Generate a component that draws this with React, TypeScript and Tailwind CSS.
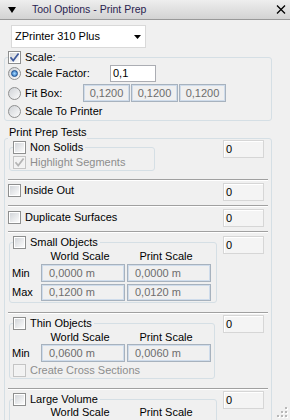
import React from 'react';

const Check: React.FC<{ checked?: boolean; disabled?: boolean }> = ({ checked, disabled }) => (
  <span
    className={`relative flex h-[13px] w-[13px] shrink-0 items-center justify-center border ${
      disabled ? 'border-[#c4c4c4] bg-[#f4f4f4]' : 'border-[#8e8f8f] bg-white'
    }`}
  >
    <span className={`h-[9px] w-[9px] ${disabled ? 'bg-[#f2f2f2]' : 'bg-linear-to-br from-[#d3d6da] to-[#fbfbfb]'}`} />
    {checked && (
      <svg className="absolute left-0 top-0" width="11" height="11" viewBox="0 0 11 11">
        <path d="M1.5 5.2 L4.2 8.6 L9.6 1.4" fill="none" stroke={disabled ? '#b4b4b4' : '#3f5a9c'} strokeWidth="1.7" />
      </svg>
    )}
  </span>
);

const Radio: React.FC<{ checked?: boolean }> = ({ checked }) => (
  <span className="flex h-[13px] w-[13px] shrink-0 items-center justify-center rounded-full border border-[#8e8f8f] bg-linear-to-br from-[#d0d3d7] to-[#fbfbfb]">
    {checked && <span className="h-[7px] w-[7px] rounded-full border border-[#1c4f8f] bg-radial from-[#a6dbff] to-[#1f67b8]" />}
  </span>
);

const Count: React.FC<{ className?: string }> = ({ className = '' }) => (
  <div className={`flex h-[18px] w-[41px] shrink-0 items-center border border-[#d6d6d6] bg-[#f4f4f4] pl-[2px] shadow-[inset_1px_1px_0_#fff] ${className}`}>
    0
  </div>
);

const Dim: React.FC<{ value: string; w: string; center?: boolean; h?: string }> = ({ value, w, center, h = 'h-[18px]' }) => (
  <div
    className={`flex ${h} ${w} items-center border border-[#a7b2be] bg-[#f0f0f0] text-[#6d6d6d] shadow-[inset_0_0_0_1px_#cfdceb] ${
      center ? 'justify-center' : 'pl-[7px]'
    }`}
  >
    {value}
  </div>
);

const Legend: React.FC<{ label: string; checked?: boolean }> = ({ label, checked }) => (
  <legend className="ml-[3px] pr-[2px]">
    <span className="flex h-[13px] items-center gap-[4px]">
      <Check checked={checked} />
      <span>{label}</span>
    </span>
  </legend>
);

const ScaleHeader = () => (
  <div className="flex h-[14px] items-center gap-[2px] pl-[28px]">
    <span className="w-[84px] text-center">World Scale</span>
    <span className="w-[84px] text-center">Print Scale</span>
  </div>
);

const ScaleRow: React.FC<{ label: string; world: string; print: string; className?: string; h?: string }> = ({
  label,
  world,
  print,
  className = '',
  h = 'h-[18px]',
}) => (
  <div className={`flex items-center pl-[2px] ${className}`}>
    <span className="w-[29px]">{label}</span>
    <div className="flex gap-[2px]">
      <Dim value={world} w="w-[84px]" h={h} />
      <Dim value={print} w="w-[84px]" h={h} />
    </div>
  </div>
);

const Sep: React.FC<{ className?: string }> = ({ className = '' }) => (
  <div className={`mx-[3px] h-px bg-[#a0a0a0] shadow-[0_1px_0_#fff] ${className}`} />
);

export default function App() {
  return (
    <div className="relative h-[420px] w-[290px] overflow-hidden bg-[#f0f0f0] font-['Liberation_Sans',Arial,sans-serif] text-[11px] leading-[13px] text-black">
      {/* title bar */}
      <div className="flex h-[20px] items-center border-b border-[#999] bg-linear-to-b from-[#eeeeee] to-[#d3d3d3]">
        <svg className="ml-[8px]" width="8" height="6" viewBox="0 0 8 6">
          <path d="M0 0 H8 L4 6 Z" fill="#000" />
        </svg>
        <span className="ml-[16px] text-[10.5px] text-[#2a2350]">Tool Options - Print Prep</span>
        <svg className="ml-auto mr-[4px]" width="10" height="9" viewBox="0 0 10 9">
          <path d="M1 0.5 L9 8.5 M9 0.5 L1 8.5" stroke="#000" strokeWidth="1.3" />
        </svg>
      </div>

      <div className="flex flex-col pl-[4px]">
        {/* printer dropdown */}
        <div className="ml-[7px] mt-[5px] flex h-[23px] w-[135px] items-center border border-[#d9d9d9] bg-white pl-[3px]">
          <span>ZPrinter 310 Plus</span>
          <svg className="ml-auto mr-[4px]" width="7" height="4" viewBox="0 0 7 4">
            <path d="M0 0 H7 L3.5 4 Z" fill="#000" />
          </svg>
        </div>

        {/* scale group */}
        <fieldset className="mt-[3px] w-[268px] rounded-[3px] border border-[#d5dfe5] pb-[2px]">
          <Legend label="Scale:" checked />
          <div className="mt-[1px] flex h-[17px] items-center pl-[3px]">
            <Radio checked />
            <span className="ml-[4px] w-[85px]">Scale Factor:</span>
            <div className="flex h-[17px] w-[46px] items-center border border-[#abadb3] bg-white pl-[2px]">0,1</div>
          </div>
          <div className="mt-[2px] flex h-[18px] items-center pl-[3px]">
            <Radio />
            <span className="ml-[4px] w-[58px]">Fit Box:</span>
            <div className="flex gap-[1px]">
              <Dim value="0,1200" w="w-[47px]" center />
              <Dim value="0,1200" w="w-[47px]" center />
              <Dim value="0,1200" w="w-[47px]" center />
            </div>
          </div>
          <div className="mt-[3px] flex h-[13px] items-center pl-[3px]">
            <Radio />
            <span className="ml-[4px]">Scale To Printer</span>
          </div>
        </fieldset>

        {/* print prep tests */}
        <div className="relative ml-[4px] mt-[5px] h-[13px] w-fit bg-[#f0f0f0] px-[1px]">Print Prep Tests</div>
        <div className="-mt-[1px] w-[268px] rounded-t-[3px] border border-[#d5dfe5] pb-[40px]">
          <div className="flex items-start justify-between pl-[4px] pr-[7px]">
            <fieldset className="mt-[2px] w-[146px] rounded-[3px] border border-[#d5dfe5] pb-[1px]">
              <Legend label="Non Solids" />
              <div className="mt-[2px] flex h-[13px] items-center gap-[4px] pl-[3px] text-[#8d8d8d]">
                <Check checked disabled />
                <span>Highlight Segments</span>
              </div>
            </fieldset>
            <Count className="mt-[1px]" />
          </div>

          <Sep className="mt-[8px]" />
          <div className="mt-[3px] flex items-start justify-between pl-[3px] pr-[7px]">
            <div className="mt-[1px] flex h-[13px] items-center gap-[3px]">
              <Check />
              <span>Inside Out</span>
            </div>
            <Count />
          </div>

          <Sep className="mt-[4px]" />
          <div className="mt-[3px] flex items-start justify-between pl-[3px] pr-[7px]">
            <div className="mt-[2px] flex h-[13px] items-center gap-[4px]">
              <Check />
              <span>Duplicate Surfaces</span>
            </div>
            <Count />
          </div>

          <Sep className="mt-[4px]" />
          <div className="mt-[4px] flex items-start justify-between pl-[4px] pr-[7px]">
            <fieldset className="w-[208px] rounded-[3px] border border-[#d5dfe5] pb-[1px]">
              <Legend label="Small Objects" />
              <ScaleHeader />
              <ScaleRow className="mt-[1px]" label="Min" world="0,0000 m" print="0,0000 m" />
              <ScaleRow className="mt-[2px]" label="Max" world="0,1200 m" print="0,0120 m" h="h-[17px]" />
            </fieldset>
            <Count />
          </div>

          <Sep className="mt-[9px]" />
          <div className="mt-[2px] flex items-start justify-between pl-[4px] pr-[7px]">
            <fieldset className="mt-[2px] w-[206px] rounded-[3px] border border-[#d5dfe5] pb-[1px]">
              <Legend label="Thin Objects" />
              <ScaleHeader />
              <ScaleRow label="Min" world="0,0600 m" print="0,0060 m" />
              <div className="mt-[2px] flex h-[13px] items-center gap-[4px] pl-[3px] text-[#8d8d8d]">
                <Check disabled />
                <span>Create Cross Sections</span>
              </div>
            </fieldset>
            <Count />
          </div>

          <Sep className="mt-[9px]" />
          <div className="mt-[2px] flex items-start justify-between pl-[4px] pr-[7px]">
            <fieldset className="mt-[2px] w-[208px] rounded-[3px] border border-[#d5dfe5] pb-[1px]">
              <Legend label="Large Volume" />
              <div className="flex h-[13px] items-center gap-[2px] pl-[28px]">
                <span className="w-[84px] text-center">World Scale</span>
                <span className="w-[84px] text-center">Print Scale</span>
              </div>
              <ScaleRow className="mt-[1px]" label="Max" world="1,0000 m" print="0,1000 m" />
            </fieldset>
            <Count />
          </div>
        </div>
      </div>

      {/* resize grip */}
      <svg className="absolute bottom-[2px] right-[2px]" width="11" height="11" viewBox="0 0 11 11">
        {[
          [8, 0],
          [4, 4],
          [8, 4],
          [0, 8],
          [4, 8],
          [8, 8],
        ].map(([x, y], i) => (
          <g key={i}>
            <rect x={x + 1} y={y + 1} width="2" height="2" fill="#fff" />
            <rect x={x} y={y} width="2" height="2" fill="#b8b8b8" />
          </g>
        ))}
      </svg>
    </div>
  );
}
